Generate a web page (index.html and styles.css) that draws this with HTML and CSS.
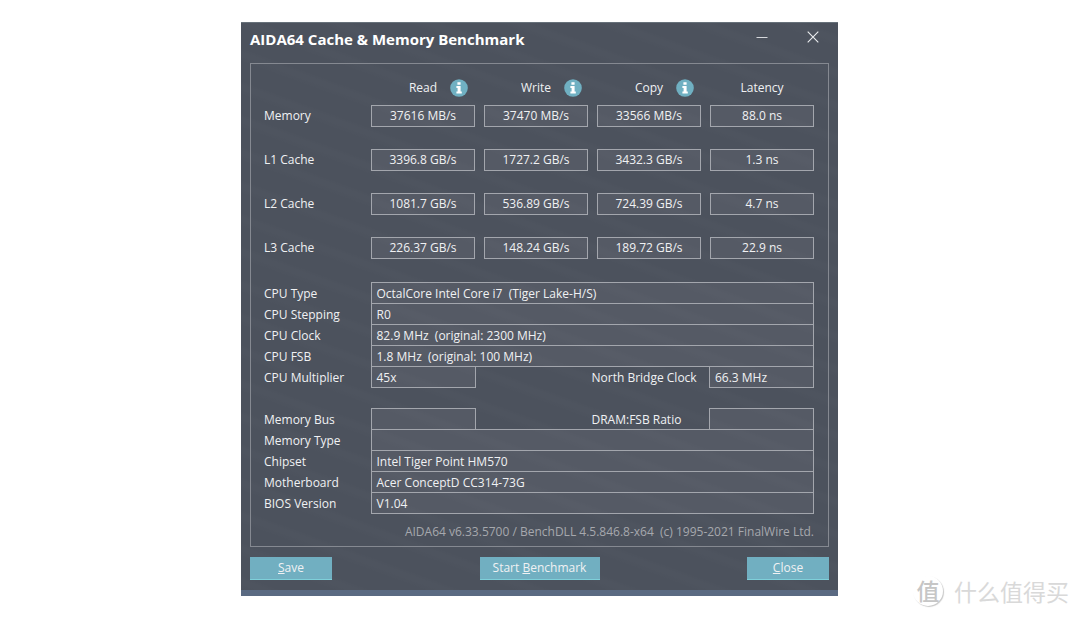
FILE: index.html
```html
<!DOCTYPE html>
<html lang="en">
<head>
<meta charset="utf-8">
<title>AIDA64 Cache &amp; Memory Benchmark</title>
<link rel="stylesheet" href="styles.css">
</head>
<body>
<svg class="sprite" aria-hidden="true">
  <symbol id="info" viewBox="0 0 18 18">
    <circle cx="9" cy="9" r="8.8" fill="#70b0c2"/>
    <path fill="#fff" d="M7.4 3.2h3.2v2.6H7.4zM6.4 7h4.2v5.4h1.2v2H6.4v-2h1.2V9H6.4z"/>
  </symbol>
</svg>
<main class="window">
  <header class="titlebar">
    <h1 class="title">AIDA64 Cache &amp; Memory Benchmark</h1>
    <button class="control" type="button" aria-label="Minimize"><svg width="12" height="12" viewBox="0 0 12 12"><path d="M0.5 6.5h11" stroke="#d6d8dc" fill="none"/></svg></button>
    <button class="control" type="button" aria-label="Close window"><svg width="12" height="12" viewBox="0 0 12 12"><path d="M.7.7l10.6 10.6M11.3.7L.7 11.3" stroke="#eceef0" stroke-width="1.1" fill="none"/></svg></button>
  </header>

  <section class="panel">
    <table class="bench">
      <colgroup><col class="bench-name"><col><col><col><col></colgroup>
      <thead>
        <tr>
          <td></td>
          <th scope="col"><div class="head"><span class="head-text">Read</span><button class="info" type="button" aria-label="About read"><svg width="18" height="18"><use href="#info"/></svg></button></div></th>
          <th scope="col"><div class="head"><span class="head-text">Write</span><button class="info" type="button" aria-label="About write"><svg width="18" height="18"><use href="#info"/></svg></button></div></th>
          <th scope="col"><div class="head"><span class="head-text">Copy</span><button class="info" type="button" aria-label="About copy"><svg width="18" height="18"><use href="#info"/></svg></button></div></th>
          <th scope="col"><div class="head"><span class="head-text">Latency</span></div></th>
        </tr>
      </thead>
      <tbody>
        <tr><th scope="row">Memory</th><td><div class="value">37616 MB/s</div></td><td><div class="value">37470 MB/s</div></td><td><div class="value">33566 MB/s</div></td><td><div class="value">88.0 ns</div></td></tr>
        <tr><th scope="row">L1 Cache</th><td><div class="value">3396.8 GB/s</div></td><td><div class="value">1727.2 GB/s</div></td><td><div class="value">3432.3 GB/s</div></td><td><div class="value">1.3 ns</div></td></tr>
        <tr><th scope="row">L2 Cache</th><td><div class="value">1081.7 GB/s</div></td><td><div class="value">536.89 GB/s</div></td><td><div class="value">724.39 GB/s</div></td><td><div class="value">4.7 ns</div></td></tr>
        <tr><th scope="row">L3 Cache</th><td><div class="value">226.37 GB/s</div></td><td><div class="value">148.24 GB/s</div></td><td><div class="value">189.72 GB/s</div></td><td><div class="value">22.9 ns</div></td></tr>
      </tbody>
    </table>

    <table class="specs">
      <colgroup><col class="spec-name"><col class="spec-short"><col><col class="spec-short"></colgroup>
      <tbody>
        <tr><th scope="row">CPU Type</th><td colspan="3">OctalCore Intel Core i7&nbsp; (Tiger Lake-H/S)</td></tr>
        <tr><th scope="row">CPU Stepping</th><td colspan="3">R0</td></tr>
        <tr><th scope="row">CPU Clock</th><td colspan="3">82.9 MHz&nbsp; (original: 2300 MHz)</td></tr>
        <tr><th scope="row">CPU FSB</th><td colspan="3">1.8 MHz&nbsp; (original: 100 MHz)</td></tr>
        <tr><th scope="row">CPU Multiplier</th><td>45x</td><th class="second" scope="row">North Bridge Clock</th><td>66.3 MHz</td></tr>
      </tbody>
    </table>

    <table class="specs">
      <colgroup><col class="spec-name"><col class="spec-short"><col><col class="spec-short"></colgroup>
      <tbody>
        <tr><th scope="row">Memory Bus</th><td></td><th class="second" scope="row">DRAM:FSB Ratio</th><td></td></tr>
        <tr><th scope="row">Memory Type</th><td colspan="3"></td></tr>
        <tr><th scope="row">Chipset</th><td colspan="3">Intel Tiger Point HM570</td></tr>
        <tr><th scope="row">Motherboard</th><td colspan="3">Acer ConceptD CC314-73G</td></tr>
        <tr><th scope="row">BIOS Version</th><td colspan="3">V1.04</td></tr>
      </tbody>
    </table>

    <p class="version">AIDA64 v6.33.5700 / BenchDLL 4.5.846.8-x64&nbsp; (c) 1995-2021 FinalWire Ltd.</p>
  </section>

  <footer class="actions">
    <button class="action" type="button"><u>S</u>ave</button>
    <button class="action action-wide" type="button">Start <u>B</u>enchmark</button>
    <button class="action" type="button"><u>C</u>lose</button>
  </footer>
</main>
<div class="watermark" lang="zh-CN"><span class="seal">值</span><span>什么值得买</span></div>
</body>
</html>
```

FILE: styles.css
```css
* { box-sizing: border-box; }

body {
  margin: 0;
  padding: 22px 17px 22px 16px;
  background: #fff;
  color: #f0f1f3;
  font: 12px/20px "Open Sans", "Noto Sans", sans-serif;
}

.sprite { position: absolute; width: 0; height: 0; }

button {
  padding: 0;
  border: 0;
  background: none;
  color: inherit;
  font: inherit;
}

.window {
  max-width: 597px;
  margin: 0 auto;
  padding: 0 9px 10px;
  border-top: 1px solid #67717a;
  border-bottom: 6px solid #5a6a82;
  background:
    repeating-linear-gradient(200deg, transparent 0 10px, rgba(255, 255, 255, 0.012) 14px 18px, transparent 24px 31px),
    #4c525d;
}

.titlebar {
  display: flex;
  align-items: flex-start;
  height: 40px;
}

.title {
  flex: 1;
  margin: 0;
  color: #fff;
  font-size: 15px;
  font-weight: 700;
  line-height: 32px;
}

.control {
  display: grid;
  place-items: center;
  width: 32px;
  height: 28px;
}

.control + .control { margin-left: 19px; }

.panel {
  padding: 12px 14px 4px 13px;
  border: 1px solid #858991;
}

table {
  width: 100%;
  border-collapse: collapse;
  table-layout: fixed;
}

th {
  padding: 0;
  font-weight: 400;
  text-align: left;
}

.bench td,
.bench thead th { padding: 0 0 0 9px; }

.bench-name { width: 98px; }
.bench thead tr { height: 29px; }
.bench thead th { vertical-align: top; }
.bench tbody tr { height: 44px; }
.bench tbody th,
.bench tbody td { vertical-align: top; }
.bench tbody th { line-height: 22px; }

.head {
  display: grid;
  grid-template-columns: 1fr auto 1fr;
  align-items: center;
  height: 24px;
}

.head-text { grid-column: 2; }

.info {
  width: 18px;
  height: 18px;
  margin-left: 13px;
}

.info svg { display: block; }

.value {
  height: 22px;
  border: 1px solid #a3a6ad;
  background: rgba(255, 255, 255, 0.05);
  text-align: center;
}

.specs { margin-bottom: 20px; }
.bench + .specs { margin-top: 1px; }
.spec-name { width: 107px; }
.spec-short { width: 104px; }

.specs th,
.specs td {
  height: 21px;
  padding: 2px 0 0;
  line-height: 18px;
}

.specs td {
  padding: 2px 5px 0;
  border: 1px solid #a3a6ad;
  background: rgba(255, 255, 255, 0.05);
}

.specs .second { padding-left: 116px; white-space: nowrap; }

.version {
  margin: -12px 0 0;
  color: #a6a8ad;
  text-align: right;
}

.actions {
  display: flex;
  justify-content: space-between;
  padding-top: 10px;
}

.action {
  width: 82px;
  height: 23px;
  border-bottom: 1px solid #7fd0da;
  background: #71afc1;
  line-height: 22px;
}

.action-wide { width: 120px; }

.watermark {
  position: absolute;
  right: 11px;
  bottom: 12px;
  display: flex;
  align-items: center;
  gap: 11px;
  color: #d9d9d9;
  font: 23px/30px "Noto Sans CJK SC", sans-serif;
}

.seal {
  width: 30px;
  height: 30px;
  border-radius: 50%;
  box-shadow: 1px 1px 1px #c8c8c8;
  color: #c6c6c6;
  font-size: 23px;
  font-weight: 500;
  line-height: 28px;
  text-align: center;
}
```
